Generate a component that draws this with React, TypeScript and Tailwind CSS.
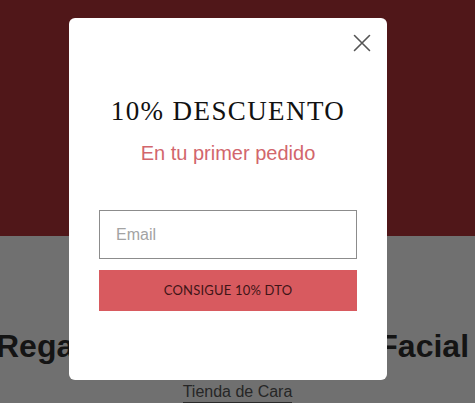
export default function App() {
  return (
    <div className="relative w-[475px] h-[403px] overflow-hidden bg-[#707070]" style={{ fontFamily: '"Liberation Sans", Arial, sans-serif' }}>
      {/* background page (dimmed) */}
      <div className="h-[236px] bg-[#501719]" />
      <div className="flex flex-col items-center">
        <div className="mt-[92px] h-[36px] w-full flex justify-center overflow-visible">
          <h1 className="whitespace-nowrap text-[32px] leading-[36px] font-bold text-[#141414] -ml-[10px]">Regalos para el Cuidado Facial</h1>
        </div>
        <div className="mt-[18px] border-b border-[#2a2a2a] text-[16px] leading-[20px] text-[#262626]">Tienda de Cara</div>
      </div>

      {/* modal */}
      <div className="absolute left-[69px] top-[18px] w-[318px] h-[362px] bg-white rounded-[6px] flex flex-col items-center px-[30px]">
        <button className="absolute right-[16px] top-[16px] w-[18px] h-[18px] text-[#555]" aria-label="Cerrar">
          <svg viewBox="0 0 18 18" width="18" height="18" fill="none" stroke="currentColor" strokeWidth="1.6" strokeLinecap="round">
            <path d="M1.5 1.5 L16.5 16.5 M16.5 1.5 L1.5 16.5" />
          </svg>
        </button>
        <h2 className="mt-[77px] text-[27px] leading-[32px] tracking-[1.4px] text-[#111]" style={{ fontFamily: '"Liberation Serif", "Times New Roman", serif' }}>10% DESCUENTO</h2>
        <p className="mt-[14px] text-[20px] leading-[24px] text-[#d2666c]">En tu primer pedido</p>
        <div className="mt-[45px] w-full h-[49px] border border-[#8c8c8c] flex items-center px-[16px]">
          <span className="text-[16px] text-[#a3a3a3]">Email</span>
        </div>
        <div className="mt-[11px] w-full h-[41px] bg-[#d85a5f] flex items-center justify-center">
          <span className="text-[13px] text-[#3f1517] tracking-[0.2px]" style={{ fontFamily: 'Lato, "Open Sans", sans-serif' }}>CONSIGUE 10% DTO</span>
        </div>
      </div>
    </div>
  );
}
